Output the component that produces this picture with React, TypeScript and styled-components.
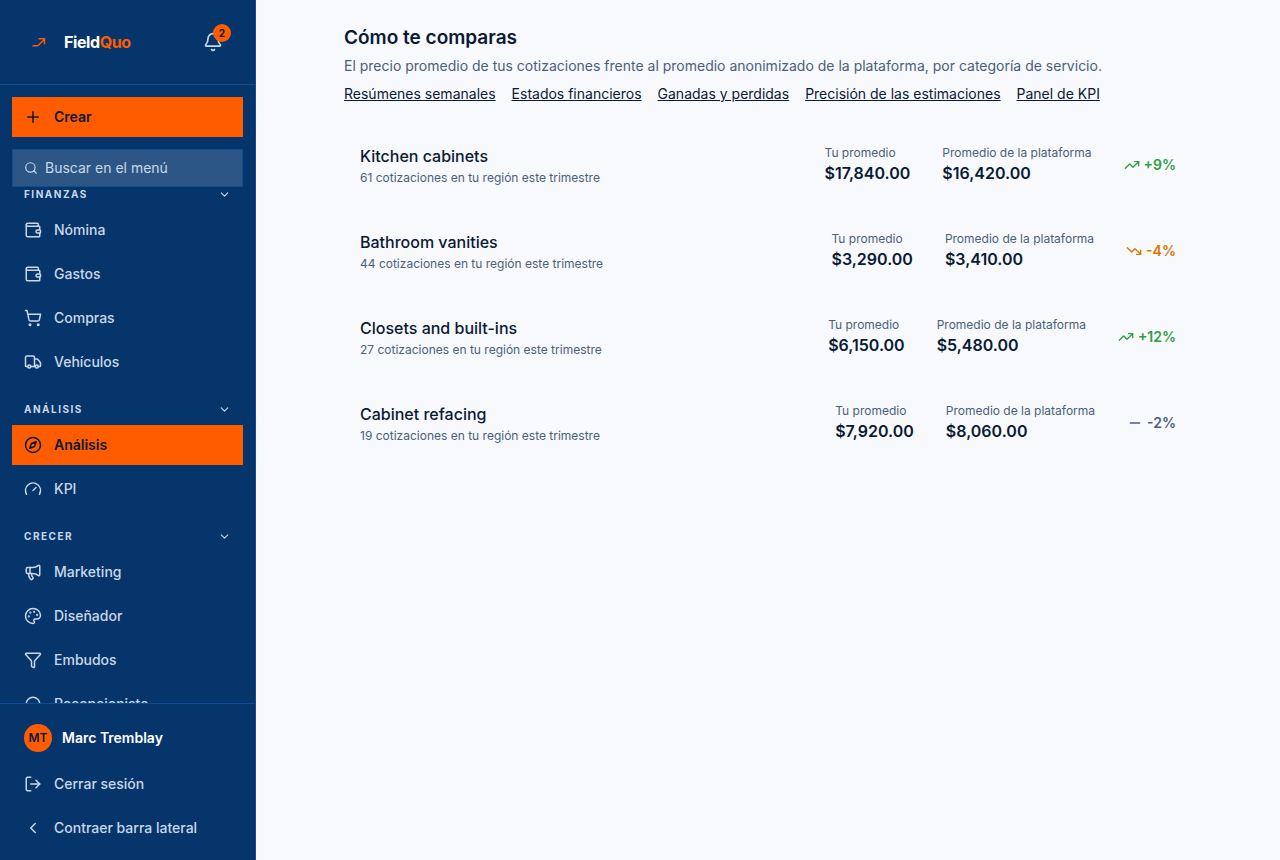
import React from "react";
import styled, { createGlobalStyle } from "styled-components";
import {
  Bell, ChevronDown, ChevronLeft, Compass, Funnel, Gauge, Headphones, LogOut, Megaphone,
  Minus, Palette, Plus, Search, ShoppingCart, TrendingDown, TrendingUp, Truck, Wallet,
} from "lucide-react";
import type { LucideIcon } from "lucide-react";

const color = {
  navy: "#05356b",
  line: "#0f4c92",
  orange: "#ff5c00",
  ink: "#0a1a33",
  muted: "#4a5f7a",
  pale: "#cbd8e8",
  page: "#f7f9fd",
};

const GlobalStyle = createGlobalStyle`
  *, *::before, *::after { box-sizing: border-box; }
  body { margin: 0; background: ${color.page}; color: ${color.ink}; font: 400 14px/20px Inter, sans-serif; -webkit-font-smoothing: antialiased; }
  button, input { font: inherit; color: inherit; }
  h1, h2, p, ul, dl, dd { margin: 0; padding: 0; }
  ul { list-style: none; }
  svg { flex-shrink: 0; display: block; }
`;

const Shell = styled.div`
  display: flex;
  min-height: 100vh;
`;

const Sidebar = styled.aside`
  position: sticky;
  top: 0;
  display: flex;
  flex-direction: column;
  flex: 0 0 256px;
  min-width: 0;
  height: 100vh;
  background: ${color.navy};
  border-right: 1px solid ${color.line};
  color: ${color.pale};
`;

const Brand = styled.header`
  display: flex;
  align-items: center;
  justify-content: space-between;
  padding: 22px 22px 22px 24px;
  border-bottom: 1px solid ${color.line};
`;

const BrandLink = styled.a`
  display: flex;
  align-items: center;
  gap: 10px;
  color: #fff;
  font-size: 16px;
  font-weight: 700;
  line-height: 24px;
  letter-spacing: -0.4px;
  text-decoration: none;
`;

const Accent = styled.span`
  color: ${color.orange};
`;

const BellButton = styled.button`
  position: relative;
  display: grid;
  place-items: center;
  width: 40px;
  height: 40px;
  padding: 0;
  border: 0;
  background: none;
  cursor: pointer;
`;

const Badge = styled.span`
  position: absolute;
  top: 2px;
  right: 2px;
  width: 18px;
  height: 18px;
  border-radius: 50%;
  background: ${color.orange};
  color: ${color.ink};
  font-size: 10px;
  font-weight: 700;
  line-height: 18px;
  text-align: center;
`;

const Tools = styled.div`
  position: relative;
  z-index: 1;
  display: flex;
  flex-direction: column;
  gap: 12px;
  padding: 12px 12px 0;
`;

const CreateButton = styled.button`
  display: flex;
  align-items: center;
  gap: 12px;
  height: 40px;
  padding: 0 12px;
  border: 0;
  background: ${color.orange};
  color: ${color.ink};
  font-weight: 600;
  cursor: pointer;
`;

const SearchBox = styled.label`
  display: flex;
  align-items: center;
  gap: 7px;
  height: 38px;
  padding: 0 11px;
  border: 1px solid ${color.line};
  background: #2b5686;
`;

const SearchInput = styled.input`
  flex: 1;
  width: 100%;
  min-width: 0;
  padding: 0;
  border: 0;
  outline: 0;
  background: none;
  &::placeholder { color: ${color.pale}; opacity: 1; }
`;

const Nav = styled.nav`
  display: flex;
  flex-direction: column;
  gap: 16px;
  flex: 1;
  min-height: 0;
  margin-top: -4px;
  padding: 0 12px;
  overflow-y: auto;
  scrollbar-width: none;
`;

const SectionToggle = styled.button`
  display: flex;
  align-items: center;
  justify-content: space-between;
  width: 100%;
  height: 22px;
  margin-bottom: 5px;
  padding: 0 12px;
  border: 0;
  background: none;
  font-size: 10px;
  font-weight: 700;
  letter-spacing: 1.5px;
  text-transform: uppercase;
  cursor: pointer;
`;

const ItemList = styled.ul`
  display: flex;
  flex-direction: column;
  gap: 4px;
`;

const ItemLink = styled.a<{ $active?: boolean }>`
  display: flex;
  align-items: center;
  gap: 12px;
  height: 40px;
  padding: 0 12px;
  background: ${(p) => (p.$active ? color.orange : "transparent")};
  color: ${(p) => (p.$active ? color.ink : "inherit")};
  font-weight: ${(p) => (p.$active ? 600 : 500)};
  text-decoration: none;
`;

const Account = styled.footer`
  display: flex;
  flex-direction: column;
  gap: 4px;
  padding: 12px;
  border-top: 1px solid ${color.line};
`;

const UserLink = styled.a`
  display: flex;
  align-items: center;
  gap: 10px;
  height: 44px;
  padding: 0 12px;
  color: #fff;
  font-weight: 600;
  text-decoration: none;
`;

const Avatar = styled.span`
  display: grid;
  place-items: center;
  width: 28px;
  height: 28px;
  border-radius: 50%;
  background: ${color.orange};
  color: ${color.ink};
  font-size: 12px;
`;

const AccountButton = styled.button`
  display: flex;
  align-items: center;
  gap: 12px;
  height: 40px;
  padding: 0 12px;
  border: 0;
  background: none;
  font-weight: 500;
  cursor: pointer;
`;

const Main = styled.main`
  flex: 1;
  min-width: 0;
`;

const Content = styled.div`
  max-width: 896px;
  margin: 0 auto;
  padding: 24px;
`;

const PageHeader = styled.header`
  margin-bottom: 24px;
`;

const Title = styled.h1`
  font-size: 19px;
  font-weight: 600;
  line-height: 28px;
`;

const Intro = styled.p`
  margin-top: 4px;
  color: ${color.muted};
`;

const ReportLinks = styled.nav`
  display: flex;
  flex-wrap: wrap;
  gap: 4px 16px;
  margin-top: 8px;
`;

const ReportLink = styled.a`
  color: ${color.ink};
  text-decoration: underline;
`;

const Categories = styled.ul`
  display: flex;
  flex-direction: column;
  gap: 12px;
`;

const CategoryRow = styled.li`
  display: flex;
  flex-wrap: wrap;
  align-items: center;
  justify-content: space-between;
  gap: 16px;
  padding: 16px;
`;

const CategoryName = styled.h2`
  font-size: 16px;
  font-weight: 500;
  line-height: 24px;
`;

const CategoryNote = styled.p`
  margin-top: 2px;
  color: ${color.muted};
  font-size: 12px;
  line-height: 16px;
`;

const Figures = styled.dl`
  display: flex;
  align-items: center;
  gap: 32px;
`;

const FigureLabel = styled.dt`
  color: ${color.muted};
  font-size: 12px;
  line-height: 16px;
`;

const FigureValue = styled.dd`
  font-size: 16px;
  font-weight: 600;
  line-height: 24px;
`;

type Trend = "up" | "down" | "flat";
const trendColor: Record<Trend, string> = { up: "#2f9e44", down: "#e07400", flat: color.muted };
const trendIcon: Record<Trend, LucideIcon> = { up: TrendingUp, down: TrendingDown, flat: Minus };

const Delta = styled.div<{ $trend: Trend }>`
  display: flex;
  align-items: center;
  gap: 4px;
  color: ${(p) => trendColor[p.$trend]};
  font-weight: 600;
`;

const sections: { title: string; items: { label: string; icon: LucideIcon; active?: boolean }[] }[] = [
  {
    title: "Finanzas",
    items: [
      { label: "Nómina", icon: Wallet },
      { label: "Gastos", icon: Wallet },
      { label: "Compras", icon: ShoppingCart },
      { label: "Vehículos", icon: Truck },
    ],
  },
  {
    title: "Análisis",
    items: [
      { label: "Análisis", icon: Compass, active: true },
      { label: "KPI", icon: Gauge },
    ],
  },
  {
    title: "Crecer",
    items: [
      { label: "Marketing", icon: Megaphone },
      { label: "Diseñador", icon: Palette },
      { label: "Embudos", icon: Funnel },
      { label: "Recepcionista", icon: Headphones },
    ],
  },
];

const reports = ["Resúmenes semanales", "Estados financieros", "Ganadas y perdidas", "Precisión de las estimaciones", "Panel de KPI"];

const categories: { name: string; count: number; own: string; platform: string; delta: string; trend: Trend }[] = [
  { name: "Kitchen cabinets", count: 61, own: "$17,840.00", platform: "$16,420.00", delta: "+9%", trend: "up" },
  { name: "Bathroom vanities", count: 44, own: "$3,290.00", platform: "$3,410.00", delta: "-4%", trend: "down" },
  { name: "Closets and built-ins", count: 27, own: "$6,150.00", platform: "$5,480.00", delta: "+12%", trend: "up" },
  { name: "Cabinet refacing", count: 19, own: "$7,920.00", platform: "$8,060.00", delta: "-2%", trend: "flat" },
];

function LogoMark() {
  return (
    <svg width="30" height="30" viewBox="0 0 30 30" fill="none" stroke={color.orange} strokeWidth="1.4" aria-hidden="true">
      <path d="M8.5 18.8h4.8l1.4-.8 5.6-5.6M14.5 11.7h6v5.6" />
    </svg>
  );
}

export default function App() {
  return (
    <Shell>
      <GlobalStyle />
      <Sidebar>
        <Brand>
          <BrandLink href="#">
            <LogoMark />
            <span>Field<Accent>Quo</Accent></span>
          </BrandLink>
          <BellButton aria-label="Notificaciones">
            <Bell size={20} />
            <Badge>2</Badge>
          </BellButton>
        </Brand>
        <Tools>
          <CreateButton>
            <Plus size={18} />
            Crear
          </CreateButton>
          <SearchBox>
            <Search size={14} />
            <SearchInput type="text" placeholder="Buscar en el menú" aria-label="Buscar en el menú" />
          </SearchBox>
        </Tools>
        <Nav>
          {sections.map((section) => (
            <div key={section.title}>
              <SectionToggle aria-expanded="true">
                {section.title}
                <ChevronDown size={13} />
              </SectionToggle>
              <ItemList>
                {section.items.map(({ label, icon: Icon, active }) => (
                  <li key={label}>
                    <ItemLink href="#" $active={active}>
                      <Icon size={18} />
                      {label}
                    </ItemLink>
                  </li>
                ))}
              </ItemList>
            </div>
          ))}
        </Nav>
        <Account>
          <UserLink href="#">
            <Avatar>MT</Avatar>
            Marc Tremblay
          </UserLink>
          <AccountButton>
            <LogOut size={18} />
            Cerrar sesión
          </AccountButton>
          <AccountButton>
            <ChevronLeft size={18} />
            Contraer barra lateral
          </AccountButton>
        </Account>
      </Sidebar>
      <Main>
        <Content>
          <PageHeader>
            <Title>Cómo te comparas</Title>
            <Intro>El precio promedio de tus cotizaciones frente al promedio anonimizado de la plataforma, por categoría de servicio.</Intro>
            <ReportLinks>
              {reports.map((label) => (
                <ReportLink key={label} href="#">{label}</ReportLink>
              ))}
            </ReportLinks>
          </PageHeader>
          <Categories>
            {categories.map((c) => {
              const Icon = trendIcon[c.trend];
              return (
                <CategoryRow key={c.name}>
                  <div>
                    <CategoryName>{c.name}</CategoryName>
                    <CategoryNote>{c.count} cotizaciones en tu región este trimestre</CategoryNote>
                  </div>
                  <Figures>
                    <div>
                      <FigureLabel>Tu promedio</FigureLabel>
                      <FigureValue>{c.own}</FigureValue>
                    </div>
                    <div>
                      <FigureLabel>Promedio de la plataforma</FigureLabel>
                      <FigureValue>{c.platform}</FigureValue>
                    </div>
                    <Delta $trend={c.trend}>
                      <Icon size={16} />
                      {c.delta}
                    </Delta>
                  </Figures>
                </CategoryRow>
              );
            })}
          </Categories>
        </Content>
      </Main>
    </Shell>
  );
}
